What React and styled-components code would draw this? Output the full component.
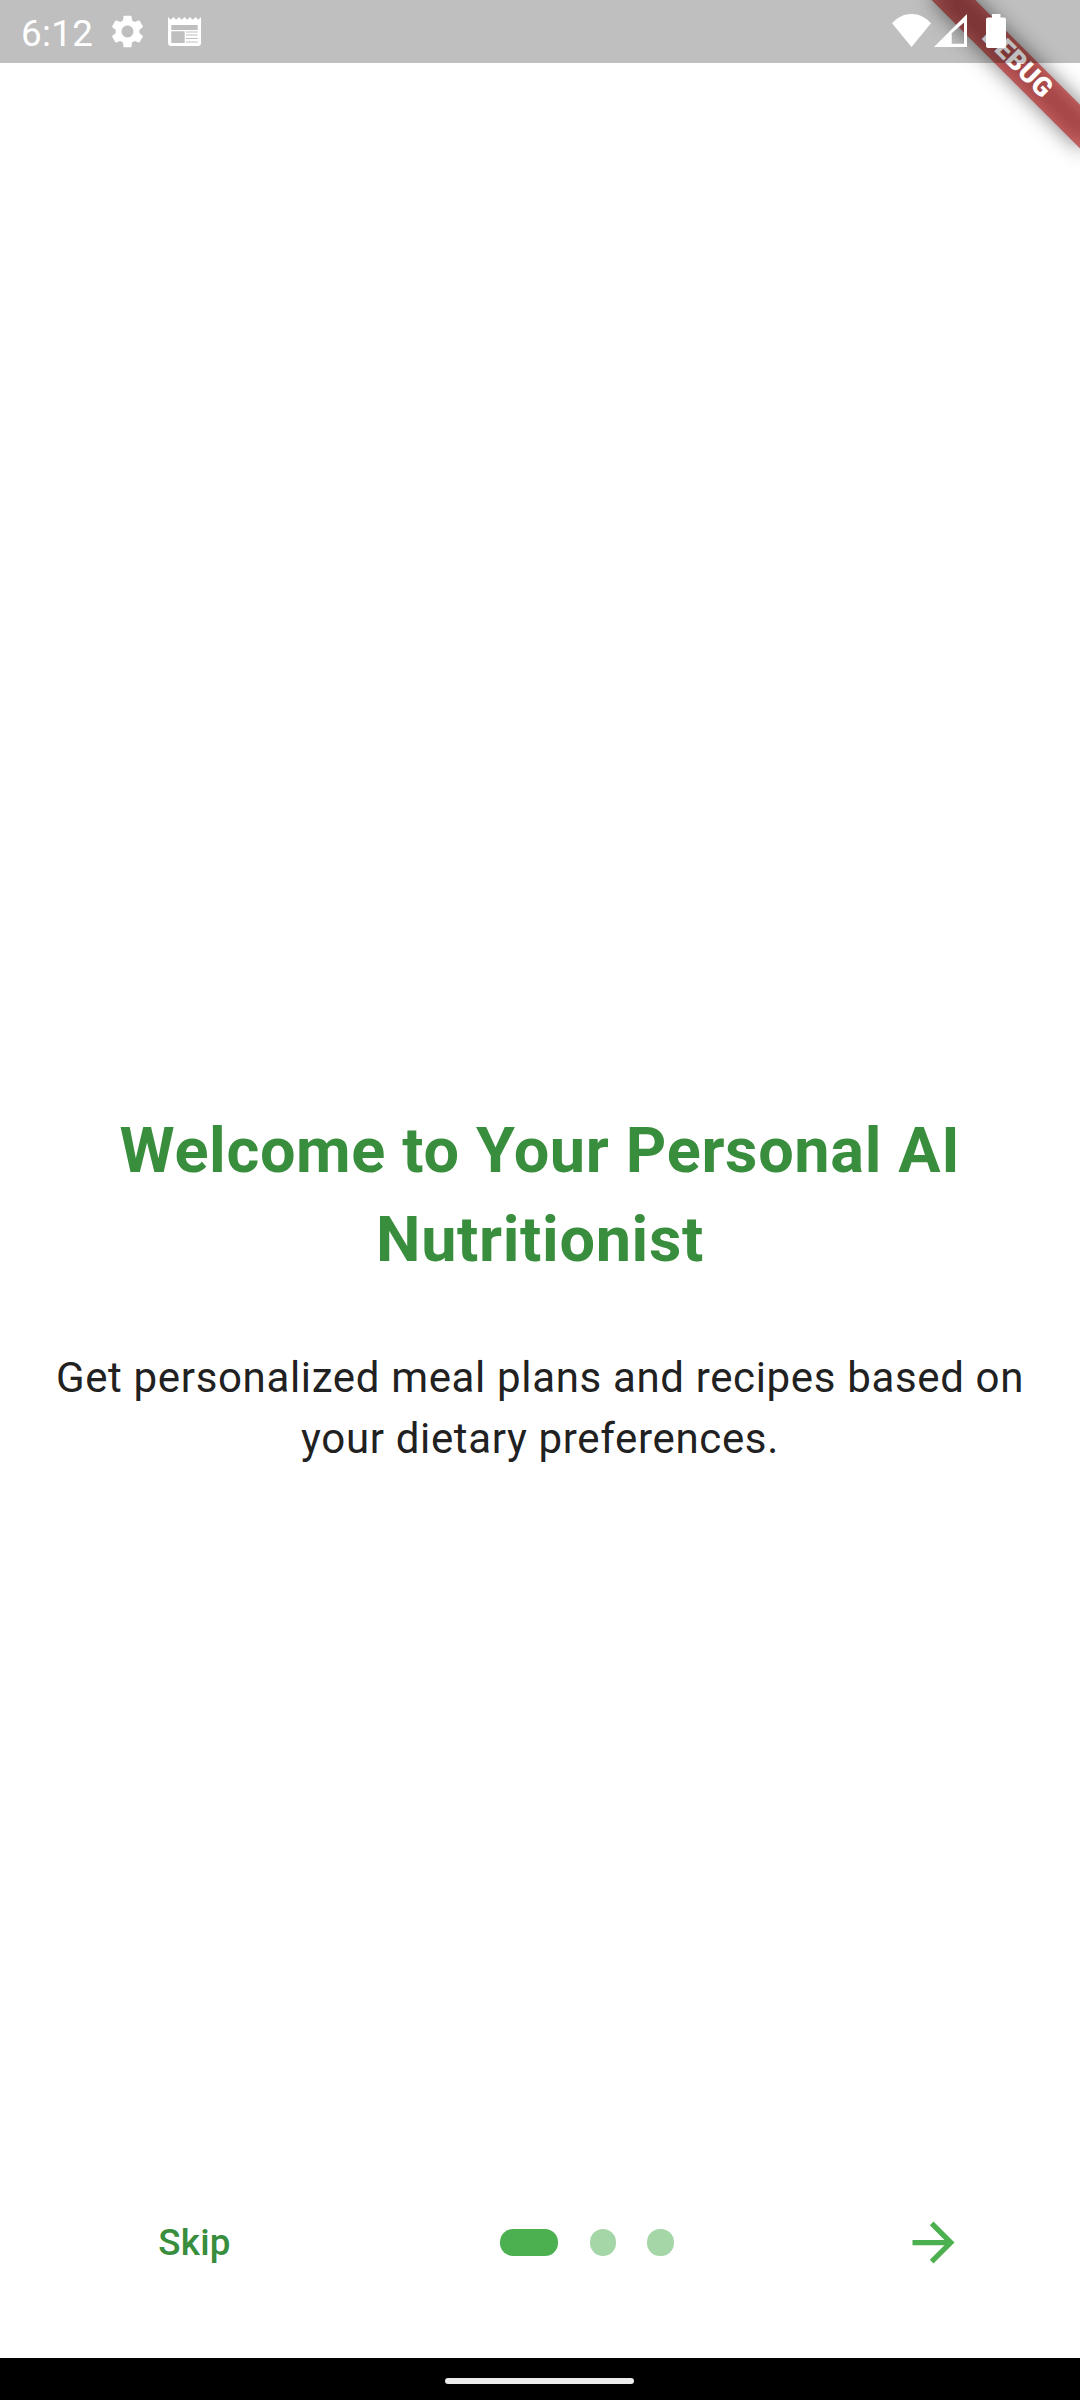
import React from "react";
import styled, { createGlobalStyle } from "styled-components";

const Global = createGlobalStyle`
  *, *::before, *::after { box-sizing: border-box; }
  body { margin: 0; background: #fff; font-family: Roboto, "Liberation Sans", sans-serif; }
`;

const Screen = styled.div`
  position: relative;
  display: flex;
  flex-direction: column;
  width: 1080px;
  height: 2400px;
  overflow: hidden;
  background: #ffffff;
`;

const StatusBar = styled.header`
  position: relative;
  z-index: 2;
  flex: none;
  display: flex;
  justify-content: space-between;
  height: 63px;
  padding: 0 74px 0 21px;
  background: rgba(0, 0, 0, 0.25);
  color: #fff;
`;

const StatusGroup = styled.div`
  display: flex;
  align-items: flex-start;
`;

const Clock = styled.span`
  font-size: 36.75px;
  line-height: 43px;
  margin-top: 12px;
  width: 89.5px;
  letter-spacing: 0.35px;
`;

const StatusIcon = styled.svg`
  display: block;
  flex: none;
  width: ${(p) => p.$w}px;
  height: ${(p) => p.$h}px;
  margin-left: ${(p) => p.$gap || 0}px;
  margin-top: ${(p) => p.$top || 0}px;
  fill: #fff;
`;

const BannerCorner = styled.div`
  position: absolute;
  z-index: 1;
  top: 0;
  right: 0;
  width: 0;
  height: 0;
  transform: rotate(45deg);
  transform-origin: 0 0;
`;

const Ribbon = styled.div`
  position: absolute;
  left: -105px;
  top: 73.5px;
  width: 210px;
  height: 31.5px;
  display: flex;
  align-items: center;
  justify-content: center;

  &::before {
    content: "";
    position: absolute;
    inset: 0;
    background: rgba(0, 0, 0, 0.5);
    filter: blur(10.4px);
  }
  &::after {
    content: "";
    position: absolute;
    inset: 0;
    background: rgba(183, 28, 28, 0.627);
  }
`;

const RibbonText = styled.span`
  position: relative;
  z-index: 1;
  margin-bottom: 1.6px;
  color: #fff;
  font-size: 26.8px;
  font-weight: 900;
  line-height: 1;
  letter-spacing: 0.2px;
`;

const Content = styled.main`
  flex: 1;
  display: flex;
  flex-direction: column;
  align-items: center;
  padding: 1043px 42px 0;
  text-align: center;
`;

const Title = styled.h1`
  margin: 0;
  color: #388e3c;
  font-size: 63px;
  font-weight: 700;
  line-height: 89px;
  letter-spacing: 0.65625px;
`;

const Description = styled.p`
  margin: 63px 0 0;
  color: #212121;
  font-size: 42px;
  font-weight: 400;
  line-height: 61px;
  letter-spacing: 0.65625px;
`;

const Controls = styled.footer`
  flex: none;
  display: flex;
  align-items: center;
  height: 126px;
  margin-bottom: 52.6px;
  padding: 0 84px 0 127px;
`;

const SkipButton = styled.button`
  width: 135px;
  height: 105px;
  padding: 2px 0 0;
  border: 0;
  background: none;
  color: #388e3c;
  font: 500 36.75px/52px Roboto, "Liberation Sans", sans-serif;
  letter-spacing: 0.2625px;
`;

const Dots = styled.div`
  display: flex;
  gap: 31.5px;
  margin-left: 238.4px;
`;

const Dot = styled.span`
  width: ${(p) => (p.$active ? 57.75 : 26.25)}px;
  height: 26.25px;
  border-radius: 13.125px;
  background: ${(p) => (p.$active ? "#4caf50" : "#a5d6a7")};
`;

const NextButton = styled.button`
  display: flex;
  align-items: center;
  justify-content: center;
  width: 126px;
  height: 126px;
  margin-left: auto;
  padding: 0;
  border: 0;
  background: none;
`;

const ArrowIcon = styled.svg`
  display: block;
  width: 63px;
  height: 63px;
  fill: #4caf50;
`;

const NavBar = styled.nav`
  flex: none;
  display: flex;
  justify-content: center;
  height: 42px;
  padding: 20px 1px 0 0;
  background: #000;
`;

const NavHandle = styled.span`
  width: 189px;
  height: 6px;
  border-radius: 3px;
  background: #ececec;
`;

const pages = [0, 1, 2];

export default function App() {
  const current = 0;
  return (
    <Screen>
      <Global />
      <StatusBar>
        <StatusGroup>
          <Clock>6:12</Clock>
          <StatusIcon viewBox="2 2 20 20" $w={33} $h={33} $top={15}>
            <path d="M19.14 12.94c.04-.3.06-.61.06-.94 0-.32-.02-.64-.07-.94l2.03-1.58c.18-.14.23-.41.12-.61l-1.92-3.32c-.12-.22-.37-.29-.59-.22l-2.39.96c-.5-.38-1.03-.7-1.62-.94l-.36-2.54c-.04-.24-.24-.41-.48-.41h-3.84c-.24 0-.43.17-.47.41l-.36 2.54c-.59.24-1.13.57-1.62.94l-2.39-.96c-.22-.08-.47 0-.59.22L2.74 8.87c-.12.21-.08.47.12.61l2.03 1.58c-.05.3-.09.63-.09.94s.02.64.07.94l-2.03 1.58c-.18.14-.23.41-.12.61l1.92 3.32c.12.22.37.29.59.22l2.39-.96c.5.38 1.03.7 1.62.94l.36 2.54c.05.24.24.41.48.41h3.84c.24 0 .44-.17.47-.41l.36-2.54c.59-.24 1.13-.56 1.62-.94l2.39.96c.22.08.47 0 .59-.22l1.92-3.32c.12-.22.07-.47-.12-.61l-2.01-1.58zM12 15.6c-1.98 0-3.6-1.62-3.6-3.6s1.62-3.6 3.6-3.6 3.6 1.62 3.6 3.6-1.62 3.6-3.6 3.6z" />
          </StatusIcon>
          <StatusIcon viewBox="0 0 33 29" $w={33} $h={29} $gap={24.8} $top={17}>
            <path
              fillRule="evenodd"
              d="M0 0 L2.75 2.8 L5.5 0 L8.25 2.8 L11 0 L13.75 2.8 L16.5 0 L19.25 2.8 L22 0 L24.75 2.8 L27.5 0 L30.25 2.8 L33 0 V26 a3 3 0 0 1 -3 3 H3 a3 3 0 0 1 -3 -3 Z M3.3 8 V13 H29.7 V8 Z M3.3 14.3 V26 H16.7 V14.3 Z M18 14.5 V15.5 H29.7 V14.5 Z M18 17.6 V18.6 H29.7 V17.6 Z M18 21 V22 H29.7 V21 Z M18 24.6 V25.6 H29.7 V24.6 Z"
            />
          </StatusIcon>
        </StatusGroup>
        <StatusGroup>
          <StatusIcon viewBox="0 0 39 33" $w={39} $h={33} $top={14}>
            <path d="M0 9.3 C5.4 3.3 12 0 19.5 0 S33.6 3.3 39 9.3 L19.5 33 Z" />
          </StatusIcon>
          <StatusIcon viewBox="0 0 33 33" $w={33} $h={33} $gap={3} $top={14}>
            <path fillRule="evenodd" d="M0 33 L33 0 V33 Z M17.7 19.3 V29.8 H30 V8.5 Z" />
          </StatusIcon>
          <StatusIcon viewBox="0 0 20 34" $w={20} $h={34} $gap={19.3} $top={14}>
            <path d="M6 0 H14.5 V3.5 H18 a2 2 0 0 1 2 2 V32 a2 2 0 0 1 -2 2 H2 a2 2 0 0 1 -2 -2 V5.5 a2 2 0 0 1 2 -2 H6 Z" />
          </StatusIcon>
        </StatusGroup>
      </StatusBar>
      <BannerCorner>
        <Ribbon>
          <RibbonText>DEBUG</RibbonText>
        </Ribbon>
      </BannerCorner>
      <Content>
        <Title>
          Welcome to Your Personal AI
          <br />
          Nutritionist
        </Title>
        <Description>
          Get personalized meal plans and recipes based on
          <br />
          your dietary preferences.
        </Description>
      </Content>
      <Controls>
        <SkipButton>Skip</SkipButton>
        <Dots>
          {pages.map((p) => (
            <Dot key={p} $active={p === current} />
          ))}
        </Dots>
        <NextButton aria-label="Next">
          <ArrowIcon viewBox="0 0 24 24">
            <path d="M12 4l-1.41 1.41L16.17 11H4v2h12.17l-5.58 5.59L12 20l8-8z" />
          </ArrowIcon>
        </NextButton>
      </Controls>
      <NavBar>
        <NavHandle />
      </NavBar>
    </Screen>
  );
}
